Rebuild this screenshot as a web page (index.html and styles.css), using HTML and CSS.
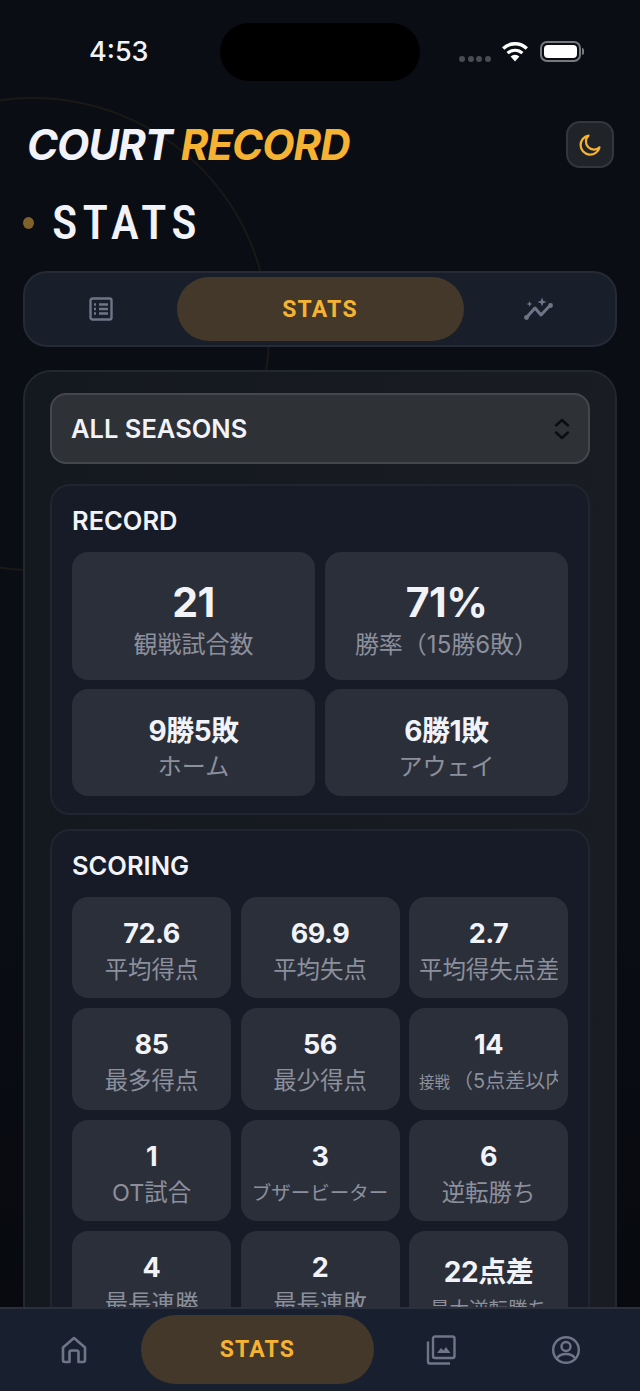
FILE: index.html
```html
<!DOCTYPE html>
<html lang="ja">

<head>
    <meta charset="UTF-8">
    <meta name="viewport" content="width=device-width, initial-scale=1.0">
    <title>Court Record</title>
    <link rel="stylesheet" href="styles.css">
</head>

<body>
    <div class="arc"></div>

    <div class="statusbar">
        <span class="time">4:53</span>
        <div class="island"></div>
        <div class="status-icons">
            <div class="signal"><i></i><i></i><i></i><i></i></div>
            <svg class="wifi" width="28" height="21" viewBox="0 0 28 21">
                <path d="M14 20.5 9.6 15.6a6.4 6.4 0 0 1 8.8 0z" fill="#fff" />
                <path d="M6.6 12.2a10.8 10.8 0 0 1 14.8 0" fill="none" stroke="#fff" stroke-width="3.2" />
                <path d="M2.2 7.4a17.2 17.2 0 0 1 23.6 0" fill="none" stroke="#fff" stroke-width="3.4" />
            </svg>
            <div class="battery"><div class="battery-fill"></div></div>
            <div class="battery-tip"></div>
        </div>
    </div>

    <header class="header">
        <h1 class="logo">COURT <span class="logo-accent">RECORD</span></h1>
        <button class="theme-btn">
            <svg width="24" height="24" viewBox="0 0 24 24" fill="none" stroke="#f6b333" stroke-width="2.2" stroke-linecap="round" stroke-linejoin="round">
                <path d="M10.5 2.6a9.6 9.6 0 1 0 11 11.8 8 8 0 0 1-11-11.8z" />
            </svg>
        </button>
    </header>

    <div class="page-title">
        <span class="dot"></span>
        <h2>STATS</h2>
    </div>

    <div class="tabs">
        <div class="tab">
            <svg width="24" height="24" viewBox="0 0 24 24" fill="none" stroke="#6f7587" stroke-width="2.4">
                <rect x="1.500" y="1.500" width="21" height="21" rx="2" />
                <path d="M10 7.500h9M10 12h9M10 16.500h9M5 7.500h2M5 12h2M5 16.500h2" />
            </svg>
        </div>
        <div class="tab tab-active">STATS</div>
        <div class="tab">
            <svg width="30" height="24" viewBox="0 0 30 24" fill="none">
                <path d="M2.5 20.5 11 11l6 7 9-9.5" stroke="#6f7587" stroke-width="3" stroke-linecap="round" stroke-linejoin="round" />
                <circle cx="2.5" cy="20.5" r="2.4" fill="#6f7587" />
                <circle cx="26.5" cy="8.5" r="2.4" fill="#6f7587" />
                <path d="M18 0.5l1.2 3.3 3.3 1.2-3.3 1.2L18 9.5l-1.2-3.3L13.500 5l3.300-1.200zM5.500 4l.8 2.200 2.200.8-2.200.8-.8 2.200-.8-2.200L2.500 7l2.200-.8z" fill="#6f7587" />
            </svg>
        </div>
    </div>

    <main class="card">
        <div class="select">
            <span>ALL SEASONS</span>
            <svg width="18" height="22" viewBox="0 0 18 22" fill="none" stroke="#0b0d12" stroke-width="2.4" stroke-linecap="round" stroke-linejoin="round">
                <path d="M3 7.500 9 2l6 5.500M3 14.500 9 20l6-5.500" />
            </svg>
        </div>

        <section class="section">
            <h3>RECORD</h3>
            <div class="grid-two">
                <div class="tile tile-big">
                    <div class="value value-big">21</div>
                    <div class="label label-big">観戦試合数</div>
                </div>
                <div class="tile tile-big">
                    <div class="value value-big">71%</div>
                    <div class="label label-big">勝率（15勝6敗）</div>
                </div>
                <div class="tile tile-mid">
                    <div class="value value-mid">9勝5敗</div>
                    <div class="label label-big">ホーム</div>
                </div>
                <div class="tile tile-mid">
                    <div class="value value-mid">6勝1敗</div>
                    <div class="label label-big">アウェイ</div>
                </div>
            </div>
        </section>

        <section class="section">
            <h3>SCORING</h3>
            <div class="grid-three">
                <div class="tile"><div class="value">72.6</div><div class="label">平均得点</div></div>
                <div class="tile"><div class="value">69.9</div><div class="label">平均失点</div></div>
                <div class="tile"><div class="value">2.7</div><div class="label">平均得失点差</div></div>
                <div class="tile"><div class="value">85</div><div class="label">最多得点</div></div>
                <div class="tile"><div class="value">56</div><div class="label">最少得点</div></div>
                <div class="tile"><div class="value">14</div><div class="label label-left"><span class="label-tiny">接戦</span><span class="label-close">（5点差以内）</span></div></div>
                <div class="tile"><div class="value">1</div><div class="label">OT試合</div></div>
                <div class="tile"><div class="value">3</div><div class="label label-small">ブザービーター</div></div>
                <div class="tile"><div class="value">6</div><div class="label">逆転勝ち</div></div>
                <div class="tile"><div class="value">4</div><div class="label">最長連勝</div></div>
                <div class="tile"><div class="value">2</div><div class="label">最長連敗</div></div>
                <div class="tile"><div class="value value-jp">22点差</div><div class="label label-small">最大逆転勝ち</div></div>
            </div>
        </section>
    </main>

    <nav class="bottom-nav">
        <div class="nav-item">
            <svg width="26" height="28" viewBox="0 0 26 28" fill="none" stroke="#6f7587" stroke-width="2.6" stroke-linejoin="round">
                <path d="M2 11.500 13 2l11 9.500V24a2 2 0 0 1-2 2h-4.500V16.500a2 2 0 0 0-2-2h-5a2 2 0 0 0-2 2V26H4a2 2 0 0 1-2-2z" />
            </svg>
        </div>
        <div class="nav-item nav-active">STATS</div>
        <div class="nav-item">
            <svg width="30" height="30" viewBox="0 0 30 30" fill="none" stroke="#6f7587" stroke-width="2.400">
                <rect x="7" y="1.500" width="21.500" height="21.500" rx="2" />
                <path d="M2 6.500V26.500a2 2 0 0 0 2 2h20" />
                <path d="M11 18l4-5 2.500 2.500 2.500-3.500 4.500 6z" fill="#6f7587" stroke="none" />
            </svg>
        </div>
        <div class="nav-item">
            <svg width="30" height="30" viewBox="0 0 30 30" fill="none" stroke="#6f7587" stroke-width="2.400">
                <circle cx="15" cy="15" r="12.800" />
                <circle cx="15" cy="11.500" r="4.500" />
                <path d="M5.800 23.500c2-3.300 5.300-4.500 9.200-4.500s7.200 1.200 9.200 4.500" />
            </svg>
        </div>
    </nav>
</body>

</html>
```

FILE: styles.css
```css
* {
    margin: 0px;
    padding: 0px;
    box-sizing: border-box;
}

html,
body {
    height: 100vh;
    overflow: hidden;
}

body {
    position: relative;
    background: linear-gradient(180deg, #0a0d14 60%, #07090e 100%);
    color: #f1f3f8;
    font-family: "Inter", "Noto Sans CJK JP", sans-serif;
}

.arc {
    position: absolute;
    left: -204px;
    top: 97px;
    width: 474px;
    height: 474px;
    border: 2px solid rgba(246, 179, 51, 0.07);
    border-radius: 50%;
}

.statusbar {
    position: relative;
    height: 121px;
}

.time {
    position: absolute;
    left: 89px;
    top: 36px;
    font-size: 27px;
    line-height: 32px;
    font-weight: 500;
}

.island {
    position: absolute;
    left: 220px;
    top: 23px;
    width: 200px;
    height: 58px;
    border-radius: 29px;
    background-color: #000;
}

.status-icons {
    position: absolute;
    left: 459px;
    top: 41px;
    display: flex;
    align-items: center;
}

.signal {
    display: flex;
    gap: 2.500px;
    margin-top: 14px;
    margin-right: 10px;
}

.signal i {
    width: 6px;
    height: 6px;
    border-radius: 50%;
    background-color: #4a4c52;
}

.wifi {
    margin-right: 11px;
}

.battery {
    width: 41px;
    height: 21px;
    border: 2px solid #77797e;
    border-radius: 7px;
    padding: 2px;
}

.battery-fill {
    height: 100%;
    border-radius: 4px;
    background-color: #fff;
}

.battery-tip {
    width: 2px;
    height: 7px;
    margin-left: 1px;
    border-radius: 0 2px 2px 0;
    background-color: #77797e;
}

.header {
    position: relative;
    display: flex;
    justify-content: space-between;
    align-items: center;
    height: 47px;
    padding: 0 26px 0 27px;
}

.logo {
    font-size: 42px;
    font-weight: 700;
    font-style: italic;
    letter-spacing: -1px;
    color: #f1f3f8;
}

.logo-accent {
    color: #f6b333;
}

.theme-btn {
    display: flex;
    justify-content: center;
    align-items: center;
    width: 48px;
    height: 47px;
    border: 2px solid #33363c;
    border-radius: 14px;
    background-color: #202328;
}

.page-title {
    position: relative;
    display: flex;
    align-items: center;
    height: 50px;
    margin-top: 30px;
    padding-left: 23px;
}

.dot {
    width: 11px;
    height: 12px;
    border-radius: 50%;
    background-color: #7f6229;
}

.page-title h2 {
    margin-left: 18px;
    font-family: "Roboto", sans-serif;
    font-size: 48px;
    line-height: 50px;
    font-weight: 500;
    font-stretch: 75%;
    letter-spacing: 5px;
}

.tabs {
    position: relative;
    display: flex;
    gap: 4px;
    height: 76px;
    margin: 23px 23px 0;
    padding: 4px;
    border: 2px solid #252a35;
    border-radius: 24px;
    background-color: #181e2a;
}

.tab,
.nav-item {
    flex: 1;
    display: flex;
    justify-content: center;
    align-items: center;
}

.tab-active,
.nav-active {
    flex: 2;
    border-radius: 36px;
    background-color: #433829;
    color: #f6b333;
    font-family: "Roboto", sans-serif;
    font-size: 23px;
    font-weight: 700;
    letter-spacing: 1.200px;
}

.card {
    position: relative;
    margin: 23px 23px 0;
    padding: 21px 25px;
    border: 2px solid #23272e;
    border-radius: 28px;
    background: linear-gradient(90deg, #14181f, #191c22);
}

.select {
    display: flex;
    justify-content: space-between;
    align-items: center;
    height: 71px;
    margin-bottom: 20px;
    padding: 0 17px 0 19px;
    border: 2px solid #45474b;
    border-radius: 16px;
    background-color: #2e3136;
    font-size: 25.500px;
    font-weight: 600;
}

.section {
    margin-bottom: 14px;
    padding: 20px 20px 17px;
    border: 2px solid #20252f;
    border-radius: 20px;
    background-color: #161b27;
}

.section h3 {
    height: 46px;
    font-size: 25.500px;
    line-height: 30px;
    font-weight: 600;
}

.grid-two {
    display: grid;
    grid-template-columns: 1fr 1fr;
    gap: 9px 10px;
}

.grid-three {
    display: grid;
    grid-template-columns: 1fr 1fr 1fr;
    gap: 10px 9.500px;
}

.tile {
    min-width: 0;
    height: 101.400px;
    padding: 19px 10px 0;
    border-radius: 16px;
    background-color: #2b2f3a;
    text-align: center;
    overflow: hidden;
}

.tile-big {
    height: 128px;
    padding-top: 25px;
}

.tile-mid {
    height: 107px;
    padding-top: 24px;
}

.value {
    font-size: 27px;
    line-height: 36px;
    font-weight: 700;
    letter-spacing: -0.500px;
}

.value-big {
    font-size: 41px;
    line-height: 50px;
}

.value-mid {
    font-size: 28px;
}

.value-jp {
    margin-top: 3px;
    font-size: 28px;
    line-height: 38px;
}

.label {
    height: 36px;
    font-size: 23.400px;
    line-height: 36px;
    color: #8b909c;
    white-space: nowrap;
    overflow: hidden;
}

.label-big {
    font-size: 24px;
}

.label-small {
    font-size: 19.500px;
}

.label-left {
    text-align: left;
}

.label-left span {
    vertical-align: 2px;
}

.label-tiny {
    font-size: 15.500px;
}

.label-close {
    margin-left: 3px;
    font-size: 20px;
}

.bottom-nav {
    position: fixed;
    left: 0;
    right: 0;
    bottom: 0;
    display: flex;
    gap: 9px;
    height: 84px;
    padding: 6px 16px 7px;
    border-top: 2px solid #2b303c;
    background-color: #182030;
}
```
